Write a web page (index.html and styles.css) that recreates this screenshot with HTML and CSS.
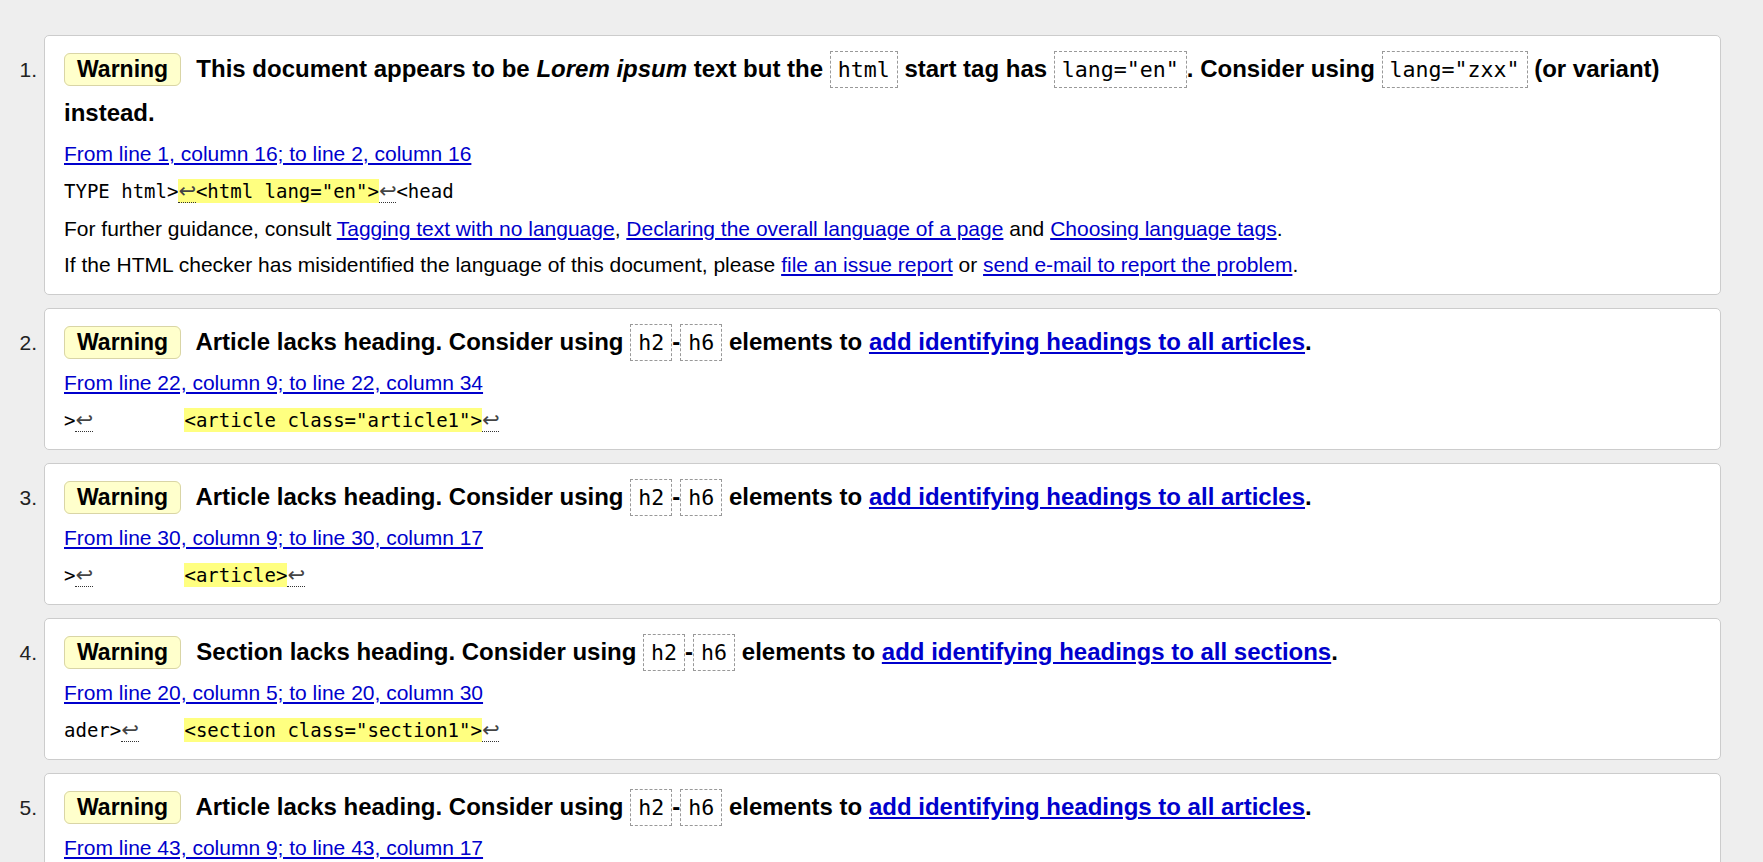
FILE: index.html
```html
<!DOCTYPE html>
<html lang="en">
<head>
<meta charset="utf-8">
<title>Validator messages</title>
<link rel="stylesheet" href="styles.css">
</head>
<body>
<ol class="messages">
  <li class="item">
    <span class="num">1.</span>
    <div class="card">
      <p class="msg"><strong class="badge">Warning</strong> <span>This document appears to be <em>Lorem ipsum</em> text but the <code>html</code> start tag has <code>lang="en"</code>. Consider using <code>lang="zxx"</code> (or variant) instead.</span></p>
      <p class="loc"><a href="#">From line 1, column 16; to line 2, column 16</a></p>
      <p class="extract">TYPE html&gt;<mark><b class="lf">↩</b>&lt;html lang="en"&gt;</mark><b class="lf">↩</b>&lt;head</p>
      <p class="note">For further guidance, consult <a href="#">Tagging text with no language</a>, <a href="#">Declaring the overall language of a page</a> and <a href="#">Choosing language tags</a>.</p>
      <p class="note">If the HTML checker has misidentified the language of this document, please <a href="#">file an issue report</a> or <a href="#">send e-mail to report the problem</a>.</p>
    </div>
  </li>
  <li class="item">
    <span class="num">2.</span>
    <div class="card">
      <p class="msg"><strong class="badge">Warning</strong> <span>Article lacks heading. Consider using <code>h2</code>-<code>h6</code> elements to <a href="#">add identifying headings to all articles</a>.</span></p>
      <p class="loc"><a href="#">From line 22, column 9; to line 22, column 34</a></p>
      <p class="extract">&gt;<b class="lf">↩</b>        <mark>&lt;article class="article1"&gt;</mark><b class="lf">↩</b></p>
    </div>
  </li>
  <li class="item">
    <span class="num">3.</span>
    <div class="card">
      <p class="msg"><strong class="badge">Warning</strong> <span>Article lacks heading. Consider using <code>h2</code>-<code>h6</code> elements to <a href="#">add identifying headings to all articles</a>.</span></p>
      <p class="loc"><a href="#">From line 30, column 9; to line 30, column 17</a></p>
      <p class="extract">&gt;<b class="lf">↩</b>        <mark>&lt;article&gt;</mark><b class="lf">↩</b></p>
    </div>
  </li>
  <li class="item">
    <span class="num">4.</span>
    <div class="card">
      <p class="msg"><strong class="badge">Warning</strong> <span>Section lacks heading. Consider using <code>h2</code>-<code>h6</code> elements to <a href="#">add identifying headings to all sections</a>.</span></p>
      <p class="loc"><a href="#">From line 20, column 5; to line 20, column 30</a></p>
      <p class="extract">ader&gt;<b class="lf">↩</b>    <mark>&lt;section class="section1"&gt;</mark><b class="lf">↩</b></p>
    </div>
  </li>
  <li class="item">
    <span class="num">5.</span>
    <div class="card">
      <p class="msg"><strong class="badge">Warning</strong> <span>Article lacks heading. Consider using <code>h2</code>-<code>h6</code> elements to <a href="#">add identifying headings to all articles</a>.</span></p>
      <p class="loc"><a href="#">From line 43, column 9; to line 43, column 17</a></p>
      <p class="extract">&gt;<b class="lf">↩</b>        <mark>&lt;article&gt;</mark><b class="lf">↩</b></p>
    </div>
  </li>
</ol>
</body>
</html>
```

FILE: styles.css
```css
html {
  overflow: hidden;
}

body {
  margin: 0;
  background: #eeeeee;
  color: #000;
  font-family: "Liberation Sans", Arial, sans-serif;
  font-size: 21px;
}

.messages {
  list-style: none;
  margin: 0;
  padding: 35px 42px 0 0;
  display: flex;
  flex-direction: column;
  gap: 13px;
}

.item {
  display: flex;
  align-items: baseline;
}

.num {
  flex: 0 0 37px;
  margin-right: 7px;
  text-align: right;
  color: #222;
  font-size: 21px;
}

.card {
  flex: 1;
  min-width: 0;
  background: #fff;
  border: 1px solid #cccccc;
  border-radius: 5px;
  padding: 11px 19px 11px;
}

.card p {
  margin: 0;
  line-height: 37px;
}

.card .msg {
  font-size: 24px;
  font-weight: bold;
  line-height: 44px;
}

.card .extract,
.card .note {
  line-height: 35px;
  padding-top: 2px;
}

.card .note + .note {
  line-height: 37px;
  padding-top: 0;
}

.badge {
  display: inline;
  font-size: 23px;
  line-height: 1;
  background: #ffffcc;
  border: 1px solid #d9d5a6;
  border-radius: 6px;
  padding: 2px 12px 3px;
  margin-right: 8.5px;
}

.msg em {
  font-style: italic;
}

.msg code {
  font-family: "DejaVu Sans Mono", monospace;
  font-weight: normal;
  font-size: 21.6px;
  line-height: 1;
  border: 1px dashed #999;
  padding: 5px 7px;
}

a {
  color: #0000cc;
  text-decoration: underline;
}

.card .extract {
  font-family: "DejaVu Sans Mono", monospace;
  font-size: 19px;
  white-space: pre;
}

.extract mark {
  background: #ffff80;
  color: #000;
  padding: 1px 0;
}

.lf {
  display: inline-block;
  width: 17.5px;
  text-align: center;
  font-family: "DejaVu Sans", sans-serif;
  font-weight: normal;
  font-size: 21px;
  color: #444;
  line-height: 22px;
  vertical-align: baseline;
  border-bottom: 1px dotted #333;
}
```
